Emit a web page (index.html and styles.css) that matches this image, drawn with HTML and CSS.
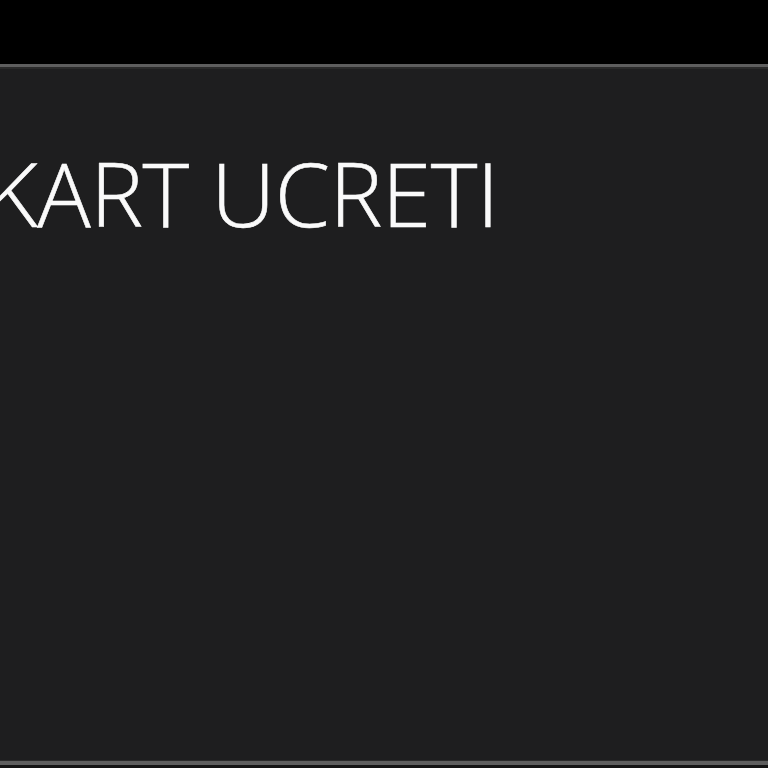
FILE: index.html
```html
<!DOCTYPE html>
<html>
<head>
<meta charset="utf-8">
<link rel="stylesheet" href="styles.css">
</head>
<body>
<div class="topbar"></div>
<main class="panel">
  <h1 class="title">KART UCRETI</h1>
</main>
<div class="bottom"></div>
</body>
</html>
```
FILE: styles.css
```css
html, body {
  margin: 0;
  padding: 0;
  background: #000;
  width: 768px;
  height: 768px;
  overflow: hidden;
}
.topbar {
  height: 64px;
  background: #000;
}
.panel {
  height: 694px;
  background: #1e1e1f;
  border-top: 3px solid #5e5e5e;
  border-bottom: 4px solid #5e5e5e;
  box-shadow: inset 0 2px 0 #2a2a2a, inset 0 -1px 0 #2a2a2a;
  overflow: hidden;
}
.title {
  margin: 0;
  padding-top: 73px;
  margin-left: -14px;
  font-family: "Open Sans", sans-serif;
  font-weight: 300;
  font-size: 89px;
  line-height: 1.2;
  color: #fafafa;
  -webkit-text-stroke: 0.6px #fafafa;
  white-space: nowrap;
  letter-spacing: -0.5px;
}
.bottom {
  height: 3px;
  background: #141414;
}
```
